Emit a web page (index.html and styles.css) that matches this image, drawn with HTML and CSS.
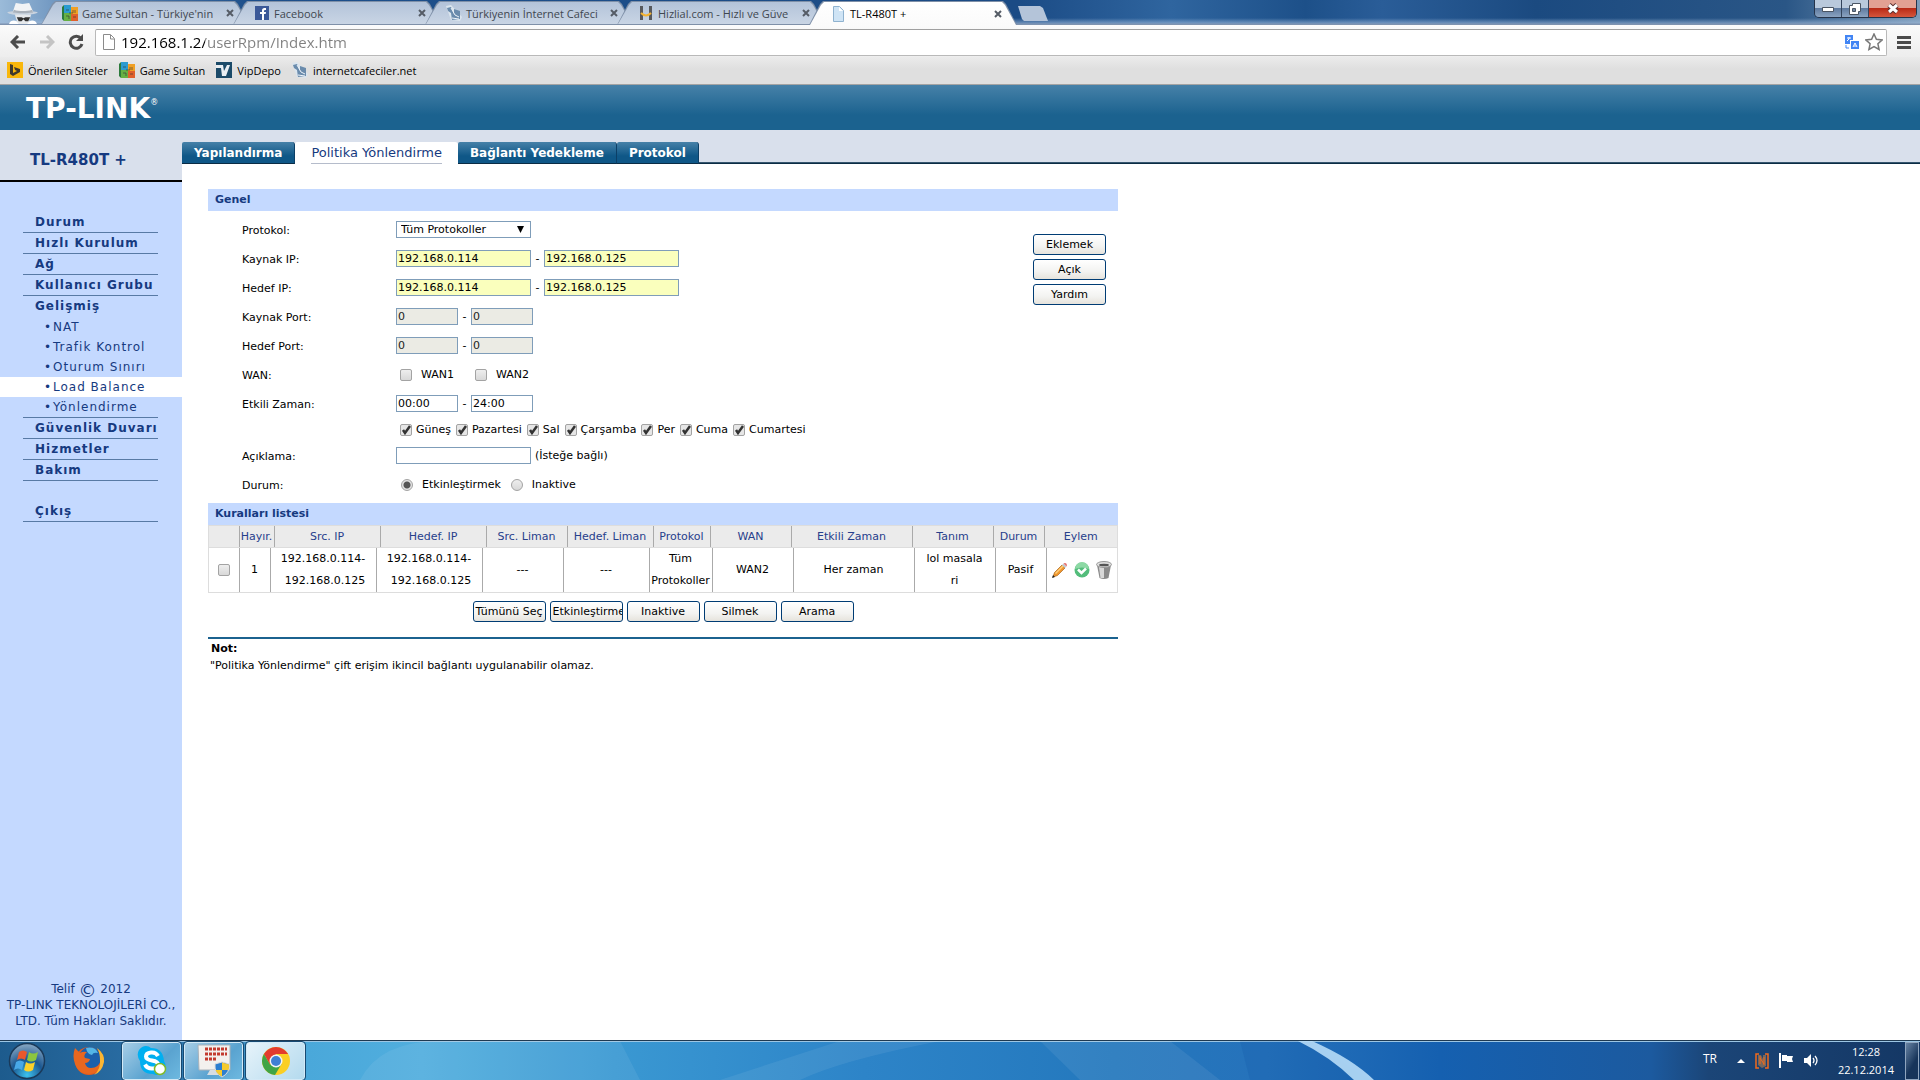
FILE: index.html
```html
<!DOCTYPE html>
<html lang="tr">
<head>
<meta charset="utf-8">
<title>TL-R480T +</title>
<link rel="stylesheet" href="styles.css">
</head>
<body>
<svg class="defs" aria-hidden="true">
  <defs>
    <symbol id="i-sultan" viewBox="0 0 16 16"><path fill="#2c7a3c" d="M0 2l2-2v16l-2-2z"/><path fill="#2b9bd0" d="M2 0h7v8H2z"/><path fill="#f0a024" d="M9 2h7v7H9z"/><path fill="#66b043" d="M2 8h7v8H2z"/><path fill="#e0602c" d="M9 9h7v7H9z"/><path stroke="#333" stroke-width=".6" fill="none" d="M4 5h3M11 5v3m2-3v3M4 11h3v3M11 12h3M7 8h4"/></symbol>
    <symbol id="i-cafe" viewBox="0 0 16 16"><path fill="#dbe5ee" d="M0 1l5-1 11 12-2 4-9-1z"/><path fill="#6a8bac" d="M1 3l4-1 3 7V4l6 2v8l-8 1-1-7-3-2z"/><path stroke="#eef4fa" fill="none" d="M5 3l4 7 4 2M6 13l7 1"/></symbol>
    <symbol id="i-doc" viewBox="0 0 12 16"><path fill="#fff" stroke="#8b8b8b" d="M.5.5h7l4 4v11H.5z"/><path fill="none" stroke="#8b8b8b" d="M7.500 1v4H11"/></symbol>
    <symbol id="i-close" viewBox="0 0 8 8"><path stroke="#555c66" stroke-width="2" d="M1 1l6 6M7 1L1 7"/></symbol>
  </defs>
</svg>

<header class="browser">
  <div class="tabstrip">
    <svg class="incognito" viewBox="0 0 36 24"><path fill="#c9d3df" d="M2 12c3-2 28-2 32 0-3 3-28 4-32 0z"/><path fill="#f1f3f5" d="M8 11l3-9 7 1 7-1 4 9c-6 2-15 2-21 0z"/><path fill="#a9b1ba" d="M9 9c6 2 13 2 19 0l1 3c-6 1-15 1-21 0z"/><path fill="#e6e9ec" d="M10 14h17l-3 10H13z"/><path fill="#333" d="M12 17h5l2 1 2-1h5l-2 4h-3l-2-2-2 2h-3z"/><path fill="#fff" d="M4 24c1-4 5-4 8-3l2 3zM33 24c-1-4-5-4-8-3l-2 3z"/></svg>
    <nav class="tabs">
      <div class="tab"><div class="tab-in"><svg class="fav"><use href="#i-sultan"/></svg><span>Game Sultan - Türkiye'nin</span><svg class="x"><use href="#i-close"/></svg></div></div>
      <div class="tab"><div class="tab-in"><svg class="fav" viewBox="0 0 16 16"><path fill="#3b5998" d="M1 1h14v14H1z"/><path fill="#fff" d="M8 15V9H6V7h2V5.500C8 3.500 9 3 12 3v2c-1.500 0-2 0-2 1v1h2l-.3 2H10v6z"/></svg><span>Facebook</span><svg class="x"><use href="#i-close"/></svg></div></div>
      <div class="tab"><div class="tab-in"><svg class="fav"><use href="#i-cafe"/></svg><span>Türkiyenin İnternet Cafeci</span><svg class="x"><use href="#i-close"/></svg></div></div>
      <div class="tab"><div class="tab-in"><svg class="fav" viewBox="0 0 16 16"><path stroke="#57595d" stroke-width="3" d="M3.500 1v14M12.500 1v14"/><path fill="none" stroke="#f2b233" stroke-width="2" d="M3 8q5 5 10 0"/></svg><span>Hizlial.com - Hızlı ve Güve</span><svg class="x"><use href="#i-close"/></svg></div></div>
      <div class="tab active"><div class="tab-in"><svg class="fav" viewBox="0 0 16 16"><path fill="#cfe4f5" stroke="#8fb2cf" d="M3.500.5h6l4 4v11h-10z"/><path fill="#fff" d="M9 1v4h4z"/></svg><span>TL-R480T +</span><svg class="x"><use href="#i-close"/></svg></div></div>
    </nav>
    <button class="newtab" aria-label="Yeni sekme"></button>
    <div class="winbtns">
      <button aria-label="Simge durumuna küçült"><svg width="12" height="6" viewBox="0 0 12 6"><path fill="#fff" stroke="#4a5563" d="M.5 1.500h11v4H.5z"/></svg></button>
      <button aria-label="Önceki boyut"><svg width="12" height="12" viewBox="0 0 12 12"><path fill="#fff" stroke="#4a5563" d="M3.500.5h8v8h-2v3h-9v-9h3z"/><path fill="#7388a3" stroke="#4a5563" d="M3.500 5.500h3v3h-3z"/></svg></button>
      <button class="winclose" aria-label="Kapat"><svg width="12" height="11" viewBox="0 0 12 11"><path stroke="#5b3030" stroke-width="5" d="M2 2l8 7M10 2L2 9"/><path stroke="#fff" stroke-width="3" d="M2 2l8 7M10 2L2 9"/></svg></button>
    </div>
  </div>
  <div class="toolbar">
    <button class="tool" aria-label="Geri"><svg width="16" height="14" viewBox="0 0 16 14"><path fill="none" stroke="#4c4c4c" stroke-width="3" d="M15 7H3M8 1L2 7l6 6"/></svg></button>
    <button class="tool" aria-label="İleri"><svg width="16" height="14" viewBox="0 0 16 14"><path fill="none" stroke="#c4c4c4" stroke-width="3" d="M1 7h12M8 1l6 6-6 6"/></svg></button>
    <button class="tool" aria-label="Yenile"><svg width="16" height="16" viewBox="0 0 16 16"><path fill="none" stroke="#4c4c4c" stroke-width="3" d="M13 4.500A6 6 0 1 0 14 10"/><path fill="#4c4c4c" d="M15 0v7H8z"/></svg></button>
    <div class="omnibox">
      <svg class="page" width="12" height="16"><use href="#i-doc"/></svg>
      <input class="url" type="text" aria-label="Adres" value="192.168.1.2/userRpm/Index.htm">
      <svg width="14" height="14" viewBox="0 0 14 14"><path fill="#4285f4" d="M0 0h8v5H5v4H0zM6 6h8v8H6z"/><path stroke="#fff" fill="none" d="M2 3h4M4 2v2L2 6M8 12l2-4 2 4M9 11h2"/><path stroke="#4285f4" fill="none" d="M1 10v3h3"/></svg>
      <svg class="star" width="18" height="18" viewBox="0 0 18 18"><path fill="#fff" stroke="#777" stroke-width="1.500" d="M9 1l2.400 5.300 5.800.6-4.300 3.900 1.200 5.700L9 13.600l-5.100 2.900 1.200-5.700L.8 6.900l5.800-.6z"/></svg>
    </div>
    <button class="tool" aria-label="Menü"><svg width="14" height="13" viewBox="0 0 14 13"><path stroke="#4a4a4a" stroke-width="3" d="M0 1.500h14M0 6.500h14M0 11.500h14"/></svg></button>
  </div>
  <nav class="bookmarks">
    <a href="#"><svg viewBox="0 0 16 16"><path fill="#f9b70b" d="M0 0h16v16H0z"/><path fill="#403a2c" d="M3 2l3 1v8l4-2-2-1-1-3 6 2v3l-7 4-3-2z"/></svg>Önerilen Siteler</a>
    <a href="#"><svg><use href="#i-sultan"/></svg>Game Sultan</a>
    <a href="#"><svg viewBox="0 0 16 16"><path fill="#1b4a68" d="M0 0h16v16H0z"/><path fill="#e9eef2" d="M0 3h7l1 6 3-6h3l-4 11H6L5 6H0z"/></svg>VipDepo</a>
    <a href="#"><svg><use href="#i-cafe"/></svg>internetcafeciler.net</a>
  </nav>
</header>

<div class="banner"><div class="logo">TP-LINK<sup>®</sup></div></div>

<div class="app">
  <aside class="side">
    <div class="model">TL-R480T +</div>
    <nav class="menu">
      <a class="item" href="#">Durum</a>
      <a class="item" href="#">Hızlı Kurulum</a>
      <a class="item" href="#">Ağ</a>
      <a class="item" href="#">Kullanıcı Grubu</a>
      <a class="item open" href="#">Gelişmiş</a>
      <a class="sub" href="#">NAT</a>
      <a class="sub" href="#">Trafik Kontrol</a>
      <a class="sub" href="#">Oturum Sınırı</a>
      <a class="sub current" href="#">Load Balance</a>
      <a class="sub" href="#">Yönlendirme</a>
      <div class="rule"></div>
      <a class="item" href="#">Güvenlik Duvarı</a>
      <a class="item" href="#">Hizmetler</a>
      <a class="item" href="#">Bakım</a>
      <a class="item exit" href="#">Çıkış</a>
    </nav>
    <p class="copy">Telif <span class="c">©</span> 2012<br>TP-LINK TEKNOLOJİLERİ CO., LTD. Tüm Hakları Saklıdır.</p>
  </aside>

  <main class="main">
    <nav class="ptabs">
      <a href="#">Yapılandırma</a>
      <a class="on" href="#"><span>Politika Yönlendirme</span></a>
      <a href="#">Bağlantı Yedekleme</a>
      <a href="#">Protokol</a>
    </nav>
    <div class="panel">
      <h2>Genel</h2>
      <form class="general">
        <div class="fields">
          <div class="row"><label class="name" for="proto">Protokol:</label><select id="proto" class="wide"><option>Tüm Protokoller</option></select></div>
          <div class="row"><label class="name" for="s1">Kaynak IP:</label><input id="s1" class="wide fill" value="192.168.0.114"><span class="dash">-</span><input class="wide fill" aria-label="Kaynak IP bitiş" value="192.168.0.125"></div>
          <div class="row"><label class="name" for="d1">Hedef IP:</label><input id="d1" class="wide fill" value="192.168.0.114"><span class="dash">-</span><input class="wide fill" aria-label="Hedef IP bitiş" value="192.168.0.125"></div>
          <div class="row"><label class="name" for="sp">Kaynak Port:</label><input id="sp" class="short" disabled value="0"><span class="dash">-</span><input class="short" aria-label="Kaynak Port bitiş" disabled value="0"></div>
          <div class="row"><label class="name" for="dp">Hedef Port:</label><input id="dp" class="short" disabled value="0"><span class="dash">-</span><input class="short" aria-label="Hedef Port bitiş" disabled value="0"></div>
          <div class="row"><span class="name">WAN:</span><div class="opts wan"><label><input type="checkbox">WAN1</label><label><input type="checkbox">WAN2</label></div></div>
          <div class="row"><label class="name" for="t1">Etkili Zaman:</label><input id="t1" class="short" value="00:00"><span class="dash">-</span><input class="short" aria-label="Bitiş zamanı" value="24:00"></div>
          <div class="row days"><span class="name"></span><div class="opts"><label><input type="checkbox" checked>Güneş</label><label><input type="checkbox" checked>Pazartesi</label><label><input type="checkbox" checked>Sal</label><label><input type="checkbox" checked>Çarşamba</label><label><input type="checkbox" checked>Per</label><label><input type="checkbox" checked>Cuma</label><label><input type="checkbox" checked>Cumartesi</label></div></div>
          <div class="row"><label class="name" for="desc">Açıklama:</label><input id="desc" class="wide"><span class="hint">(İsteğe bağlı)</span></div>
          <div class="row"><span class="name">Durum:</span><div class="opts state"><label><input type="radio" name="st" checked>Etkinleştirmek</label><label><input type="radio" name="st">Inaktive</label></div></div>
        </div>
        <div class="actions">
          <button type="button" class="btn">Eklemek</button>
          <button type="button" class="btn">Açık</button>
          <button type="button" class="btn">Yardım</button>
        </div>
      </form>
      <h2>Kuralları listesi</h2>
      <table class="rules">
        <thead><tr><th class="h-sel"></th><th class="h-no">Hayır.</th><th class="h-ip">Src. IP</th><th class="h-ip">Hedef. IP</th><th class="h-sp">Src. Liman</th><th class="h-dp">Hedef. Liman</th><th class="h-pr">Protokol</th><th class="h-wan">WAN</th><th class="h-time">Etkili Zaman</th><th class="h-wan">Tanım</th><th class="h-st">Durum</th><th>Eylem</th></tr></thead>
        <tbody><tr>
          <td class="h-sel"><input type="checkbox" aria-label="Kural 1"></td><td class="b-no">1</td>
          <td class="h-ip"><span class="range">192.168.0.114-<br>192.168.0.125</span></td>
          <td class="h-ip"><span class="range">192.168.0.114-<br>192.168.0.125</span></td>
          <td class="h-sp">---</td><td class="h-dp">---</td><td class="b-pr">Tüm Protokoller</td><td class="h-wan">WAN2</td><td class="h-time">Her zaman</td><td class="h-wan">lol masala<br>ri</td><td class="h-st">Pasif</td>
          <td><div class="acts">
            <a href="#" aria-label="Düzenle"><svg width="16" height="16" viewBox="0 0 16 16"><path fill="#f0962c" stroke="#a9651c" stroke-width=".7" d="M1 15l1.500-4.500L10 3l3 3-7.500 7.500z"/><path fill="#ffd07a" d="M3 11L11 3l1 1-8 8z"/><path fill="#c3cad0" d="M10 3l1.500-1.500 3 3L13 6z"/><path fill="#e57373" d="M11.500 1.500C13 0 16 2 14.500 4.500z"/><path fill="#222" d="M0 16l1-3 2 2z"/></svg></a>
            <a href="#" aria-label="Etkinleştir"><svg width="16" height="16" viewBox="0 0 16 16"><circle cx="8" cy="8" r="7.500" fill="#53bd7b"/><path fill="#8dd9a5" d="M1 7a7 7 0 0 1 14 0q-7-3-14 0z"/><path fill="none" stroke="#fff" stroke-width="2.500" d="M4 7.500l3.500 3.500L12 6.500"/></svg></a>
            <a href="#" aria-label="Sil"><svg width="16" height="18" viewBox="0 0 16 18"><path fill="#8b8b8b" d="M1 4h14l-2.500 13q-4.500 2-9 0z"/><path fill="#d9d9d9" d="M3 6h5v11H4.500z"/><ellipse cx="8" cy="3.500" rx="7.500" ry="3" fill="#ddd" stroke="#999"/><ellipse cx="8" cy="4" rx="5" ry="1.300" fill="#555"/></svg></a>
          </div></td>
        </tr></tbody>
      </table>
      <div class="bulk">
        <button class="btn">Tümünü Seç</button>
        <button class="btn">Etkinleştirmek</button>
        <button class="btn">Inaktive</button>
        <button class="btn">Silmek</button>
        <button class="btn">Arama</button>
      </div>
      <section class="note">
        <h3>Not:</h3>
        <p>"Politika Yönlendirme" çift erişim ikincil bağlantı uygulanabilir olamaz.</p>
      </section>
    </div>
  </main>
</div>

<footer class="taskbar">
  <svg class="sweep" viewBox="0 0 1620 40" preserveAspectRatio="none" aria-hidden="true"><path fill="#fff" opacity=".07" d="M60 40Q80 0 140 0h180L340 40zM540 0h100Q540 20 500 40h-80zM740 0h130l50 40H780z"/><path fill="#0a4a9a" opacity=".15" d="M940 0h70l60 40h-120z"/><path fill="#bfe3fb" opacity=".85" d="M998 0h14q40 18 62 40h-20Q1030 16 998 0z"/></svg>
  <button class="orb" aria-label="Başlat"><svg width="38" height="38" viewBox="0 0 38 38"><defs><radialGradient id="orb" cx=".5" cy=".9" r=".9"><stop offset="0" stop-color="#3cc2ee"/><stop offset=".5" stop-color="#1b5791"/><stop offset="1" stop-color="#8aa9c4"/></radialGradient></defs><circle cx="19" cy="19" r="17.500" fill="url(#orb)" stroke="#1a3a5a" stroke-width="1.500"/><path fill="#e9582c" d="M11 10q4-3 8 0l-2 8q-4-3-8 0z"/><path fill="#8cc63f" d="M21 10q4 3 9 0l-2 8q-5 3-9 0z"/><path fill="#48a8e8" d="M8 20q4-3 8 0l-2 8q-4-3-8 0z"/><path fill="#fcd12a" d="M18 20q4 3 9 0l-2 8q-5 3-9 0z"/></svg></button>
  <button class="ff" aria-label="Firefox"><svg width="32" height="32" viewBox="0 0 32 32"><circle cx="16" cy="16" r="14" fill="#e35a1d"/><circle cx="17" cy="13" r="11" fill="#1c60ab"/><path fill="#54b6e6" d="M13 3q9-2 12 5-5-1-6 2-5-1-6-7z"/><path fill="#e8671f" d="M2 3l5 5q3-2 7-1-4 3-2 6l5 1q-1 4-5 4 1 5 6 5 8 0 10-8 1-6-2-10 6 6 4 13-3 10-13 11Q5 29 2 19-1 11 2 3z"/><path fill="#fbb632" d="M24 3q8 6 7 14-2 10-10 13 7-6 6-15 0-7-3-12z"/></svg></button>
  <button class="task" aria-label="Skype"><svg width="30" height="32" viewBox="0 0 30 32"><path fill="#00aff0" d="M9 1q3 0 5 2 12 0 13 13 3 5 0 10-5 6-11 3Q3 29 3 16-1 10 2 5q3-4 7-4z"/><path fill="none" stroke="#fff" stroke-width="4" d="M21 11q-2-4-7-3.500-5 .5-5 4 0 3 6 4t6 4q0 4-6 4-5 0-7-4"/><circle cx="23" cy="24" r="5.500" fill="#fff" stroke="#7fba29" stroke-width="1.500"/></svg></button>
  <button class="task" aria-label="Denetim"><svg width="34" height="34" viewBox="0 0 34 34"><path fill="#f3f1ee" stroke="#a9b2ba" d="M1 1h32v25H2z"/><path fill="#d7dde2" d="M13 26h8l2 5H10z"/><path stroke="#c33b2f" stroke-width="3" stroke-dasharray="3 1" d="M8 5h22M8 10h22M8 15h11"/><path fill="#2d7fd0" stroke="#ddd" d="M25 18l7 2q1 9-7 13-8-4-7-13z"/><path fill="#f6cb2e" d="M25 18.500V26h6.500q1-3 .5-5.500zM25 26v6.500Q20 30 18.500 26z"/></svg></button>
  <button class="task lit" aria-label="Chrome"><svg width="30" height="30" viewBox="0 0 30 30"><circle cx="15" cy="15" r="14" fill="#fbcf24"/><path fill="#e33b2e" d="M2.900 8A14 14 0 0 1 27.100 8H15L9 18.500z"/><path fill="#3fa447" d="M2.900 8A14 14 0 0 0 14 29l6.500-11L9 18.500z"/><circle cx="15" cy="15" r="6.500" fill="#f4f4f4"/><circle cx="15" cy="15" r="5" fill="#3f7fd4"/></svg></button>
  <div class="tray">
    <span class="lang">TR</span>
    <svg width="8" height="5" viewBox="0 0 8 5"><path fill="#fff" d="M0 5l4-4 4 4z"/></svg>
    <svg width="14" height="16" viewBox="0 0 14 16"><path fill="none" stroke="#f26a1b" stroke-width="1.500" d="M4 1H1v14h3M10 1h3v14h-3"/><path fill="#77675c" d="M3 2h3l2 4V2h3v11l-4 2-4-3z"/><path stroke="#f26a1b" d="M5 3v8M9 4v8M5 5l4 6"/></svg>
    <svg width="15" height="15" viewBox="0 0 15 15"><path fill="#fff" d="M0 0h2v15H0zM3 2h5v1h6l-1 3 1 3H8V8H3z"/></svg>
    <svg width="15" height="15" viewBox="0 0 15 15"><path fill="#fff" d="M0 5h3l4-4v13l-4-4H0z"/><path fill="none" stroke="#fff" stroke-width="1.300" d="M9 5q2 2.500 0 5M11 3q4 4.500 0 9"/></svg>
    <time class="clock">12:28<br>22.12.2014</time>
  </div>
  <button class="desk" aria-label="Masaüstünü göster"></button>
</footer>
</body>
</html>
```
FILE: styles.css
```css
* { box-sizing: border-box; }

body {
  margin: 0;
  min-height: 100vh;
  display: flex;
  flex-direction: column;
  background: #fff;
  color: #000;
  font: 11px/15px "DejaVu Sans", sans-serif;
}

a { color: inherit; text-decoration: none; }
button, input, select { font: inherit; color: inherit; margin: 0; }
svg { flex: none; }
.defs { position: absolute; width: 0; height: 0; }

/* Browser window */
.browser { font-family: "Open Sans", sans-serif; }

.tabstrip {
  display: flex;
  height: 25px;
  padding: 1px 3px 0 4px;
  background: linear-gradient(transparent 18px, #9db8d899 23px, #7e93b0 24px),
    linear-gradient(90deg, #9bbbd9 0, #6f96c0 3%, #1d4f8b 13%, #1b4b85 53%, #2f659f 61%, #1d5089 68%, #2a5d98 72%, #1b4a80 80%, #2a5686 93%, #7d9cba);
}
.incognito { width: 37px; height: 23px; }
.tabs { display: flex; flex: 0 1 960px; min-width: 0; }
.tab {
  flex: 1 1 0;
  min-width: 0;
  margin-right: -16px;
  padding: 1px 1px 0;
  background: #7f90a8;
  clip-path: polygon(0 100%, 11px 3px, 14px 0, calc(100% - 14px) 0, calc(100% - 11px) 3px, 100% 100%);
}
.tab-in {
  display: flex;
  align-items: center;
  height: 22px;
  padding: 0 14px 0 20px;
  background: linear-gradient(#b3c3d9, #c9d5e4);
  color: #3f4750;
  font-size: 11px;
  clip-path: polygon(0 100%, 11px 3px, 14px 0, calc(100% - 14px) 0, calc(100% - 11px) 3px, 100% 100%);
}
.tab-in span {
  flex: 1;
  min-width: 0;
  margin: 0 4px;
  white-space: nowrap;
}
.fav { width: 16px; height: 16px; }
.x { width: 8px; height: 8px; }
.active { z-index: 1; }
.active .tab-in { height: 23px; background: linear-gradient(#fff, #fbfbfb); color: #000; }
.newtab {
  width: 30px;
  height: 15px;
  margin: 5px 0 0 17px;
  padding: 0;
  border: 0;
  background: #b4c4d9;
  clip-path: polygon(0 0, 22px 0, 25px 2px, 100% 100%, 6px 100%, 4px 13px);
}
.winbtns { display: flex; height: 18px; margin: -1px 0 0 auto; border: 1px solid #26344a; border-top: 0; border-radius: 0 0 5px 5px; overflow: hidden; }
.winbtns button {
  display: grid;
  place-items: center;
  width: 27px;
  padding: 0;
  border: 0;
  border-right: 1px solid #33445c;
  background: linear-gradient(#b9c9dc 50%, #5f7ba0 50%, #8ba3c0);
}
.winbtns .winclose { width: 47px; border: 0; background: linear-gradient(#e2a193 45%, #b92b17 50%, #d5563c); }

.toolbar {
  display: flex;
  align-items: center;
  height: 32px;
  padding: 2px 6px 0 8px;
  background: linear-gradient(#fbfbfb, #ededed);
}
.tool { display: grid; place-items: center; width: 20px; height: 20px; padding: 0; margin-right: 9px; border: 0; background: none; }
.tool:last-child { margin: 0; }
.omnibox {
  display: flex;
  flex: 1;
  align-items: center;
  height: 27px;
  margin-right: 7px;
  padding: 0 3px 0 7px;
  border: 1px solid #b9b9b9;
  border-top-color: #a0a0a0;
  border-radius: 2px;
  background: #fff;
}
.url {
  flex: 1;
  min-width: 0;
  margin: 0 6px;
  padding: 0;
  border: 0;
  font-size: 15px;
  line-height: 22px;
  color: transparent;
  background: linear-gradient(90deg, #000 84px, #808080 84px);
  -webkit-background-clip: text;
  background-clip: text;
}
.star { margin-left: 6px; }
.bookmarks {
  display: flex;
  align-items: center;
  gap: 11px;
  height: 28px;
  padding: 0 7px 1px;
  border-bottom: 1px solid #a3a3a3;
  background: linear-gradient(#ebebeb, #dfdfdf 12px);
  font-size: 11px;
}
.bookmarks a { display: flex; align-items: center; gap: 5px; }
.bookmarks svg { width: 16px; height: 16px; }

/* Router pages */
.banner {
  display: flex;
  align-items: center;
  height: 45px;
  padding: 3px 26px 0;
  background: linear-gradient(#4681a8, #1b628f 30px);
}
.logo { font: bold 28px/36px "DejaVu Sans", sans-serif; color: #fff; }
.logo sup { font-size: 8px; font-weight: normal; line-height: 8px; vertical-align: 13px; }

.app { display: flex; flex: 1; }
.side {
  display: flex;
  flex-direction: column;
  flex: none;
  width: 182px;
  background: #c4d9ff;
  color: #163a80;
}
.model {
  height: 52px;
  padding: 20px 0 0 30px;
  border-bottom: 2px solid #000;
  background: #d9e0ec;
  font-size: 15px;
  line-height: 20px;
  font-weight: bold;
}
.menu { display: flex; flex-direction: column; padding-top: 30px; font-size: 12px; line-height: 21px; letter-spacing: 1px; }
.item { height: 21px; margin: 0 24px 0 23px; padding-left: 12px; border-bottom: 1px solid #587aa5; font-weight: bold; white-space: nowrap; }
.item.open { border: 0; }
.item.exit { margin-top: 20px; }
.rule { height: 1px; margin: 0 24px 0 23px; background: #587aa5; }
.sub { height: 20px; padding-left: 44px; }
.sub::before { content: "•"; display: inline-block; width: 9px; font-size: 12px; letter-spacing: 0; }
.current { background: #fff; }
.copy { margin: auto 0 11px; font-size: 12px; line-height: 16px; text-align: center; }
.c { font-size: 18px; line-height: 12px; vertical-align: -4px; }

.main { flex: 1; min-width: 0; }
.ptabs {
  display: flex;
  align-items: flex-end;
  height: 34px;
  background: linear-gradient(#d9e0ec 32px, #5f7f98 32px, #0b2c44 33px);
  color: #fff;
  font-size: 12px;
  font-weight: bold;
  line-height: 20px;
}
.ptabs a {
  height: 22px;
  padding: 1px 12px;
  border-right: 1px solid #0c3f66;
  border-bottom: 1px solid #0b2c44;
  border-radius: 2px 3px 0 0;
  background: linear-gradient(#4681a8, #0f5787 14px);
}
.ptabs .on { padding: 1px 16px; border: 0; background: #fff; color: #163a80; font-size: 13px; font-weight: normal; }
.ptabs .on span { display: block; border-bottom: 1px solid #b5bccb; }

.panel { max-width: 936px; padding: 25px 0 20px 26px; }
h2 { margin: 0; height: 22px; padding: 0 7px; background: #c4d9ff; color: #163a80; font-size: 11px; line-height: 22px; }
.general { display: flex; justify-content: space-between; padding: 4px 12px 4px 34px; }
.row { display: flex; align-items: center; height: 29px; }
.row.days { height: 23px; }
.name { flex: none; width: 154px; padding-top: 1px; }
.row > input, .row > select { height: 17px; padding: 0 1px; border: 1px solid #7f9db9; border-radius: 0; background: #fff; }
.row > .wide { width: 135px; }
.row > .short { width: 62px; }
.row > .fill { background: #faffbd; }
.row > input:disabled { background: #ebebe4; color: #222; }
.row > select {
  padding: 0 4px;
  appearance: none;
  background: url("data:image/svg+xml,%3Csvg xmlns='http://www.w3.org/2000/svg' width='7' height='7'%3E%3Cpath d='M0 0h7L3.500 7z'/%3E%3C/svg%3E") right 6px top 4px no-repeat #fff;
}
.dash { width: 13px; text-align: center; }
.hint { margin-left: 4px; }
.opts { display: flex; gap: 5px; padding-left: 4px; }
.opts label { display: flex; align-items: center; gap: 4px; }
.opts.wan { gap: 21px; }
.wan label, .state label { gap: 9px; }
.opts.state { gap: 10px; padding-left: 5px; }

input[type="checkbox"], input[type="radio"] {
  appearance: none;
  width: 12px;
  height: 12px;
  border: 1px solid #a3a3a3;
  border-radius: 2px;
  background: linear-gradient(#eee, #d8d8d8);
}
input[type="radio"] { border-radius: 50%; }
input[type="checkbox"]:checked { background: url("data:image/svg+xml,%3Csvg xmlns='http://www.w3.org/2000/svg' width='10' height='10'%3E%3Cpath d='M2 5l2 3 5-7' fill='none' stroke='%23333' stroke-width='2.500'/%3E%3C/svg%3E") #e6e6e6; }
input[type="radio"]:checked { background: radial-gradient(circle, #555 3px, #e3e3e3 4px); }

.actions, .bulk { display: flex; gap: 4px; }
.actions { flex-direction: column; padding-top: 19px; }
.btn {
  width: 73px;
  height: 21px;
  padding: 0 2px;
  border: 1px solid #003c74;
  border-radius: 3px;
  background: linear-gradient(#fff, #f3f3f1 60%, #e6e3dc);
  overflow: hidden;
  white-space: nowrap;
}

.rules { display: block; border: 1px solid #ddd; }
.rules thead, .rules tbody { display: table; width: 100%; table-layout: fixed; border-collapse: collapse; }
.rules th, .rules td { padding: 0; border-right: 1px solid #aaa; text-align: center; font-weight: normal; line-height: 22px; }
.rules th:last-child, .rules td:last-child { border-right: 0; }
.rules th { height: 21px; background: #ebebeb; color: #27408b; border-bottom: 1px solid #ddd; line-height: 21px; white-space: nowrap; }
.rules td { height: 44px; }
.rules td input { display: block; margin: 0 auto; }
.rules .h-sel { width: 30px; }
.h-no { width: 35px; }
.b-no { width: 31px; }
.h-ip { width: 106px; }
.h-sp { width: 81px; }
.h-dp { width: 86px; }
.h-pr { width: 57px; }
.b-pr { width: 63px; }
.h-wan { width: 81px; }
.h-time { width: 121px; }
.h-st { width: 51px; }
.range { display: inline-block; text-align: right; }
.acts { display: flex; justify-content: center; gap: 6px; }
.acts a { display: flex; align-items: center; }
.bulk { justify-content: center; padding: 8px 0 15px; }

.note { padding: 1px 2px; border-top: 2px solid #1b628f; }
.note h3 { margin: 0; padding-left: 1px; font-size: 11px; line-height: 17px; }
.note p { margin: 0; line-height: 17px; }

/* Desktop taskbar */
.taskbar {
  position: relative;
  display: flex;
  align-items: center;
  height: 40px;
  padding-left: 8px;
  border-top: 1px solid #1f3a52;
  box-shadow: inset 0 1px #9cc6e4;
  background: linear-gradient(90deg, #1d5b8d, #2b6fa6 8%, #4aa8da 16%, #51aede 22%, #3a98d2 32%, #2d84c8 45%, #2478bd 58%, #2672bb 66%, #1560b0 75%, #1c5a9f 86%, #1b4577 89%, #143764);
  color: #fff;
  font-family: "Open Sans", sans-serif;
}
.taskbar button { display: grid; place-items: center; padding: 0; border: 0; background: none; }
.taskbar > * { position: relative; }
.taskbar .sweep { position: absolute; left: 300px; top: 0; width: calc(100% - 300px); height: 100%; }
.taskbar .orb { width: 38px; }
.taskbar .ff { width: 60px; margin: 0 5px 0 13px; }
.taskbar .task {
  width: 59px;
  height: 38px;
  margin-right: 3px;
  border: 1px solid #d3e9f6;
  border-radius: 3px;
  outline: 1px solid #174a72;
  background: linear-gradient(135deg, #a6cde6, #5aa3d0 60%, #6db9e0);
}
.taskbar .ff + .task { margin-left: -2px; }
.taskbar .lit { background: linear-gradient(135deg, #e6f3fa, #b4daee); }
.tray { display: flex; align-items: center; margin-left: auto; gap: 10px; padding-right: 11px; }
.lang { margin-right: 10px; padding-bottom: 4px; font-size: 12px; }
.clock { margin-left: 9px; font-size: 11px; line-height: 18px; text-align: center; }
.taskbar .desk { width: 14px; height: 38px; margin-right: 1px; border: 1px solid #8fa5bf; background: linear-gradient(120deg, #6783a3, #17345a 60%); }
```
